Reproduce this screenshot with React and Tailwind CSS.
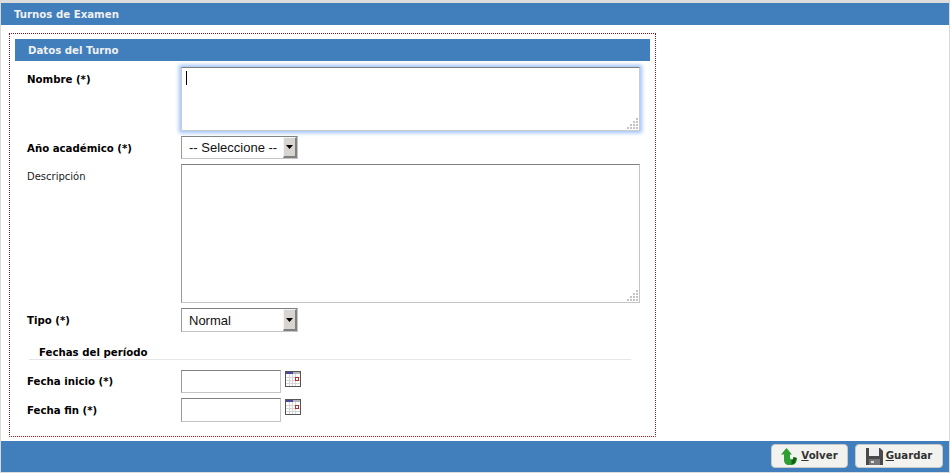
const labelBold = "w-[166px] shrink-0 pl-[12px] text-[10.2px] font-bold text-black";
const field = "border border-[#c4c4c4] border-t-[#808080] border-l-[#9a9a9a] bg-white";

const Grip = () => (
  <svg className="absolute right-[1px] bottom-[1px]" width="11" height="11" viewBox="0 0 11 11">
    <g fill="#c4c4c4">
      <rect x="9" y="0" width="2" height="2" />
      <rect x="6" y="3" width="2" height="2" />
      <rect x="9" y="3" width="2" height="2" />
      <rect x="3" y="6" width="2" height="2" />
      <rect x="6" y="6" width="2" height="2" />
      <rect x="9" y="6" width="2" height="2" />
      <rect x="0" y="9" width="2" height="2" />
      <rect x="3" y="9" width="2" height="2" />
      <rect x="6" y="9" width="2" height="2" />
      <rect x="9" y="9" width="2" height="2" />
    </g>
  </svg>
);

const FakeSelect = ({ text, textClass }) => (
  <div className={`${field} flex h-full w-[117px] items-center justify-between`}>
    <span className={`pl-[7px] font-['Liberation_Sans',sans-serif] text-[13px] text-[#111] ${textClass}`}>{text}</span>
    <span className="flex h-full w-[14px] items-center justify-center border-t border-l border-r-2 border-b-2 border-t-[#f4f4f4] border-l-[#f4f4f4] border-r-[#808080] border-b-[#808080] bg-[#d8d5d0]">
      <svg width="7" height="4" viewBox="0 0 7 4">
        <path d="M0 0h7L3.500 4z" fill="#000" />
      </svg>
    </span>
  </div>
);

const CalendarIcon = () => (
  <svg width="16" height="16" viewBox="0 0 16 16" className="ml-[4px] mt-[1px]">
    <rect x="0.5" y="0.5" width="15" height="15" fill="#fff" stroke="#555" />
    <rect x="1" y="1" width="14" height="2" fill="#b5b5b5" />
    <rect x="1" y="1" width="7" height="2" fill="#4a4a9c" />
    <path d="M1 6.500h14M1 9.500h14M1 12.500h14M4.500 3v12M7.500 3v12M10.500 3v12" stroke="#d6d6d6" fill="none" />
    <rect x="10.500" y="6.500" width="3" height="3" fill="#fff" stroke="#a33" />
  </svg>
);

const DateRow = ({ label, labelPad, className, height }) => (
  <div className={`flex ${className}`}>
    <label className={`${labelBold} ${labelPad}`}>{label}</label>
    <div className={`${field} ${height} w-[100px]`} />
    <CalendarIcon />
  </div>
);

const FloppyIcon = () => (
  <svg width="17" height="17" viewBox="0 0 17 17">
    <path d="M0 0h14l3 3v14H0z" fill="#4a4a4a" />
    <rect x="3" y="0" width="10" height="8" fill="#f0f0f0" />
    <rect x="3" y="11" width="11" height="6" fill="#777" />
    <rect x="5" y="13" width="3" height="2" fill="#ddd" />
  </svg>
);

const BackIcon = () => (
  <svg width="17" height="17" viewBox="0 0 17 17">
    <path d="M5.500 0l5.500 6.500H9v3c0 1.200.8 2 2 2h1l.5-2.500 3.500 1c0 3.800-2 7-5 7H8c-3 0-5-2-5-5V6.500H0z" fill="#2f9e33" />
    <path d="M10.500 11.500H12l.5-2.500 3 1-1.500 5-3.500 1.500z" fill="#145c14" />
  </svg>
);

const ActionButton = ({ icon, first, rest, width }) => (
  <button className={`flex h-[24px] ${width} items-center justify-center gap-[3px] rounded-[4px] border border-[#c8c8c8] bg-[#f2f2ef] text-[10.2px] font-bold text-[#333]`}>
    {icon}
    <span>
      <span className="underline">{first}</span>
      {rest}
    </span>
  </button>
);

export default function App() {
  return (
    <div className="flex h-[473px] w-[950px] flex-col overflow-hidden border-x border-[#d8d8d8] bg-white font-['DejaVu_Sans',sans-serif]">
      <div className="h-[3px] shrink-0 bg-[#dddddd]" />
      <div className="flex h-[22px] shrink-0 items-center bg-[#407fbc] pl-[13px] pt-[1px] text-[10.2px] font-bold text-[#f0f0f0]">
        Turnos de Examen
      </div>

      <div className="ml-[8px] mt-[8px] h-[404px] w-[647px] shrink-0 border border-dotted border-[#b00010] border-b-[#ff0000] px-[5px] pt-[5px]">
        <div className="flex h-[22px] w-[635px] items-center bg-[#407fbc] pl-[13px] pt-[1px] text-[10.2px] font-bold text-[#f0f0f0]">
          Datos del Turno
        </div>

        <div className="mt-[6px] flex">
          <label className={`${labelBold} pt-[5px]`}>Nombre (*)</label>
          <div className="relative h-[64px] w-[459px] border border-[#ccc] border-t-[#808080] shadow-[0_0_4px_2px_#9dc2ff]">
            <div className="ml-[4px] mt-[3px] h-[14px] w-px bg-black" />
            <Grip />
          </div>
        </div>

        <div className="mt-[5px] flex h-[23px] items-center">
          <label className={`${labelBold} pt-[3px]`}>Año académico (*)</label>
          <FakeSelect text="-- Seleccione --" />
        </div>

        <div className="mt-[5px] flex">
          <label className="w-[166px] shrink-0 pl-[12px] pt-[5px] text-[10px] text-[#222]">Descripción</label>
          <div className={`${field} relative h-[139px] w-[459px]`}>
            <Grip />
          </div>
        </div>

        <div className="mt-[5px] flex h-[24px] items-center">
          <label className={`${labelBold} pt-[1px]`}>Tipo (*)</label>
          <FakeSelect text="Normal" textClass="pt-[2px]" />
        </div>

        <div className="ml-[14px] mt-[14px] h-[14px] w-[602px] border-b border-[#e6e6e6] pl-[10px] pt-[1px] text-[10.2px] font-bold leading-[12px] text-black">
          Fechas del período
        </div>

        <DateRow label="Fecha inicio (*)" labelPad="pt-[4px]" className="mt-[10px]" height="h-[23px]" />
        <DateRow label="Fecha fin (*)" labelPad="pt-[5px]" className="mt-[5px]" height="h-[24px]" />
      </div>

      <div className="mt-[4px] flex h-[31px] shrink-0 items-start justify-end gap-[7px] bg-[#407fbc] pr-[6px] pt-[3px]">
        <ActionButton icon={<BackIcon />} first="V" rest="olver" width="w-[77px]" />
        <ActionButton icon={<FloppyIcon />} first="G" rest="uardar" width="w-[88px]" />
      </div>
      <div className="h-[1px] shrink-0 bg-[#dddddd]" />
    </div>
  );
}
